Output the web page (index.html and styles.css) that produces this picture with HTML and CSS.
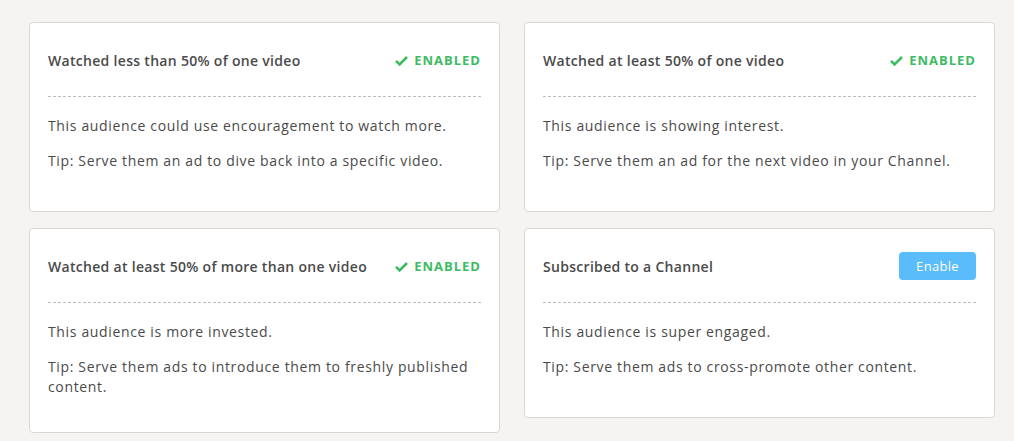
FILE: index.html
```html
<!DOCTYPE html>
<html lang="en">
<head>
    <meta charset="UTF-8">
    <meta name="viewport" content="width=device-width, initial-scale=1.0">
    <title>Audiences</title>
    <link rel="stylesheet" href="styles.css">
</head>
<body>
    <div class="audiences">
        <div class="card">
            <div class="card-head">
                <h2>Watched less than 50% of one video</h2>
                <span class="status">
                    <svg width="13" height="11" viewBox="0 0 13 11"><path d="M1 5.8l3.6 3.6L12 2" fill="none" stroke="#3dbb63" stroke-width="2.6"/></svg>
                    ENABLED
                </span>
            </div>
            <p>This audience could use encouragement to watch more.</p>
            <p>Tip: Serve them an ad to dive back into a specific video.</p>
        </div>
        <div class="card">
            <div class="card-head">
                <h2>Watched at least 50% of one video</h2>
                <span class="status">
                    <svg width="13" height="11" viewBox="0 0 13 11"><path d="M1 5.8l3.6 3.6L12 2" fill="none" stroke="#3dbb63" stroke-width="2.6"/></svg>
                    ENABLED
                </span>
            </div>
            <p>This audience is showing interest.</p>
            <p>Tip: Serve them an ad for the next video in your Channel.</p>
        </div>
        <div class="card">
            <div class="card-head">
                <h2>Watched at least 50% of more than one video</h2>
                <span class="status">
                    <svg width="13" height="11" viewBox="0 0 13 11"><path d="M1 5.8l3.6 3.6L12 2" fill="none" stroke="#3dbb63" stroke-width="2.6"/></svg>
                    ENABLED
                </span>
            </div>
            <p>This audience is more invested.</p>
            <p>Tip: Serve them ads to introduce them to freshly published content.</p>
        </div>
        <div class="card">
            <div class="card-head">
                <h2>Subscribed to a Channel</h2>
                <button class="enable">Enable</button>
            </div>
            <p>This audience is super engaged.</p>
            <p>Tip: Serve them ads to cross-promote other content.</p>
        </div>
    </div>
</body>
</html>
```

FILE: styles.css
```css
/* Reset */
body, h2, p {
    margin: 0;
    padding: 0;
}

body {
    font-family: "Open Sans", Arial, sans-serif;
    background-color: #f5f4f2;
    color: #4a4a4a;
    padding: 22px 20px 0 29px;
}

/* Two column card grid */
.audiences {
    display: grid;
    grid-template-columns: 471px 471px;
    column-gap: 24px;
    row-gap: 16px;
    align-items: start;
}

.card {
    background-color: #fff;
    border: 1px solid #d9d8d6;
    border-radius: 4px;
    padding: 23px 18px 35px 18px;
    min-height: 190px;
    box-sizing: border-box;
}

.card-head {
    display: flex;
    justify-content: space-between;
    align-items: center;
    height: 28px;
    padding-bottom: 22px;
    margin-bottom: 19px;
    border-bottom: 1px dashed #bdbdbd;
}

.card-head h2 {
    font-size: 14px;
    font-weight: 600;
    letter-spacing: 0.3px;
    color: #4a4a4a;
}

.status {
    display: flex;
    align-items: center;
    gap: 6px;
    font-size: 13px;
    font-weight: 700;
    letter-spacing: 1px;
    color: #3dbb63;
}

.enable {
    width: 77px;
    height: 28px;
    background-color: #5bbcfb;
    color: #fff;
    border: none;
    border-radius: 4px;
    font-family: inherit;
    font-size: 13px;
    letter-spacing: 0.3px;
    cursor: pointer;
}

.card p {
    font-size: 14px;
    line-height: 20px;
    letter-spacing: 0.65px;
    margin-bottom: 15px;
}

.card p:last-child {
    margin-bottom: 0;
}
```
